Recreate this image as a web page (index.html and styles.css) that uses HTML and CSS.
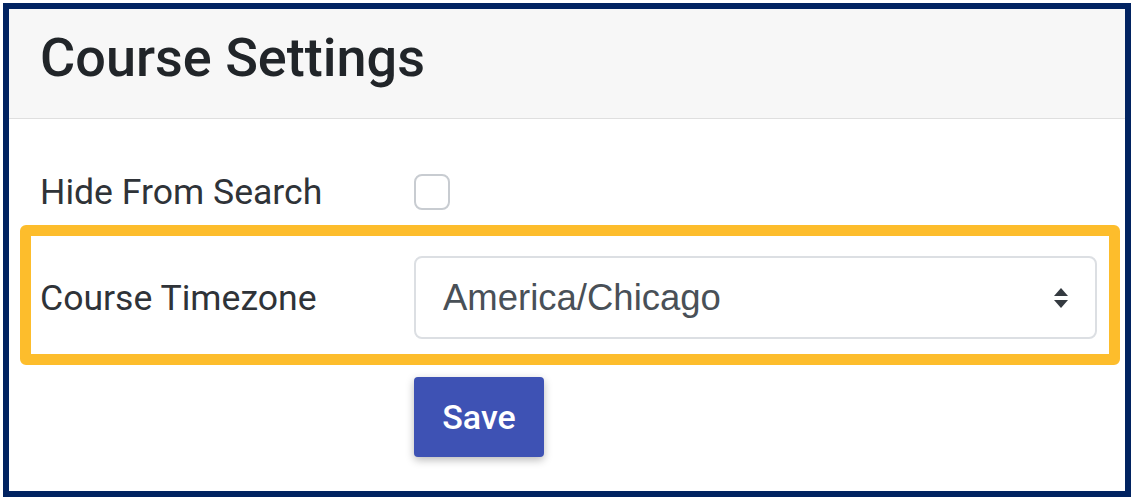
FILE: index.html
```html
<!DOCTYPE html>
<html lang="en">
<head>
    <meta charset="UTF-8">
    <meta name="viewport" content="width=device-width, initial-scale=1.0">
    <title>Course Settings</title>
    <link rel="stylesheet" href="styles.css">
</head>
<body>
    <div class="frame">
        <div class="card">
            <div class="card-header">
                <h1 class="card-title">Course Settings</h1>
            </div>

            <div class="card-body">
                <div class="form-row">
                    <label class="form-label" for="hideSearch">Hide From Search</label>
                    <div class="form-control-wrap">
                        <input type="checkbox" id="hideSearch" class="check">
                    </div>
                </div>

                <div class="form-row highlight">
                    <label class="form-label" for="timezone">Course Timezone</label>
                    <div class="form-control-wrap select-wrap">
                        <select id="timezone" class="custom-select">
                            <option value="America/Chicago">America/Chicago</option>
                            <option value="America/New_York">America/New_York</option>
                            <option value="America/Denver">America/Denver</option>
                            <option value="America/Los_Angeles">America/Los_Angeles</option>
                        </select>
                        <svg class="select-arrow" width="16" height="22" viewBox="0 0 16 22">
                            <path d="M8 1 L15 9 L1 9 Z" fill="#343a40"/>
                            <path d="M1 13 L15 13 L8 21 Z" fill="#343a40"/>
                        </svg>
                    </div>
                </div>

                <div class="form-row actions">
                    <div class="form-label"></div>
                    <button class="save-btn">Save</button>
                </div>
            </div>
        </div>
    </div>
</body>
</html>
```

FILE: styles.css
```css
body {
    margin: 0;
    background-color: #fff;
    font-family: Roboto, "Liberation Sans", Arial, sans-serif;
}

.frame {
    margin: 3px;
    width: 1116px;
    border: 6px solid #012361;
}

.card {
    background-color: #fff;
}

.card-header {
    background-color: #f7f7f7;
    border-bottom: 1px solid #dfdfdf;
    padding: 16px 31px 28px;
}

.card-title {
    margin: 0;
    font-size: 54px;
    line-height: 65px;
    font-weight: 500;
    color: #212529;
}

.card-body {
    padding: 52px 28px 34px 31px;
}

.form-row {
    display: flex;
    align-items: center;
}

.form-label {
    width: 374px;
    flex-shrink: 0;
    font-size: 35.6px;
    color: #2f3338;
}

.form-control-wrap {
    flex: 1;
}

.check {
    display: block;
    margin: 0;
    width: 36px;
    height: 36px;
    border: 2px solid #c8ccd1;
    border-radius: 8px;
    background-color: #fff;
    -webkit-appearance: none;
    appearance: none;
}

.highlight {
    margin: 12px -23px 0 -20px;
    border: 11px solid #fdbd2c;
    border-radius: 6px;
    padding: 20px 12px 15px 9px;
}

.select-wrap {
    position: relative;
}

.custom-select {
    display: block;
    width: 100%;
    height: 83px;
    padding: 0 60px 0 27px;
    font-family: "Liberation Sans", Arial, sans-serif;
    font-size: 36.5px;
    color: #495057;
    border: 2px solid #dcdfe3;
    border-radius: 8px;
    background-color: #fff;
    -webkit-appearance: none;
    appearance: none;
}

.select-arrow {
    position: absolute;
    right: 28px;
    top: 31px;
    pointer-events: none;
}

.actions {
    margin-top: 12px;
}

.save-btn {
    width: 130px;
    height: 80px;
    padding: 0;
    border: none;
    border-radius: 4px;
    background-color: #3e52b4;
    color: #fff;
    font-family: Roboto, "Liberation Sans", Arial, sans-serif;
    font-size: 34px;
    font-weight: 500;
    box-shadow: 0 3px 8px rgba(0, 0, 0, 0.28);
    cursor: pointer;
}
```
